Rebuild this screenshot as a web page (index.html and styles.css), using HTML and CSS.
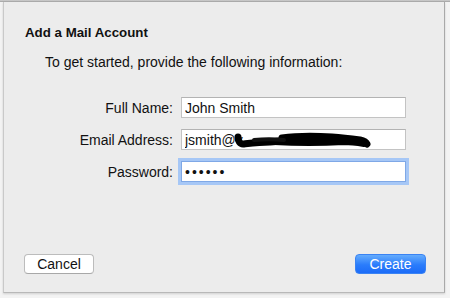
FILE: index.html
```html
<!DOCTYPE html>
<html>
<head>
<meta charset="utf-8">
<link rel="stylesheet" href="styles.css">
</head>
<body>
<div class="topline"></div>
<div class="dialog">
  <div class="title">Add a Mail Account</div>
  <div class="subtitle">To get started, provide the following information:</div>
  <div class="form">
    <label class="label">Full Name:</label>
    <div class="field"><input class="input" type="text" value="John Smith"></div>
    <label class="label">Email Address:</label>
    <div class="field">
      <input class="input" type="text" value="jsmith@v">
      <svg class="redact" width="140" height="16" viewBox="0 0 140 16">
        <path d="M4 5 C4 9 6 12 9 12 C18 11 26 10 36 10 C46 9 52 8 60 8" fill="none" stroke="#000" stroke-width="7" stroke-linecap="round"/>
        <path d="M48 6 C62 4 82 4 98 5 C110 6 118 7 126 8 C130 9 132 10 133 12" fill="none" stroke="#000" stroke-width="7" stroke-linecap="round"/>
        <path d="M40 10 C60 11 90 11 110 10 C118 10 124 11 130 12" fill="none" stroke="#000" stroke-width="6" stroke-linecap="round"/>
        <path d="M60 8 C80 8 100 8 124 9" fill="none" stroke="#000" stroke-width="5" stroke-linecap="round"/>
        <path d="M20 8 C30 7 40 7 50 8" fill="none" stroke="#111" stroke-width="4" stroke-linecap="round"/>
      </svg>
    </div>
    <label class="label">Password:</label>
    <div class="field"><input class="input focus" type="password" value="secret"></div>
  </div>
  <div class="buttons">
    <button class="btn cancel">Cancel</button>
    <button class="btn create">Create</button>
  </div>
</div>
</body>
</html>
```
FILE: styles.css
```css
html, body {
  margin: 0;
  padding: 0;
}
body {
  width: 450px;
  height: 298px;
  background: #f3f3f3;
  font-family: "Liberation Sans", Arial, sans-serif;
  font-size: 14px;
  color: #111;
  overflow: hidden;
}
.topline {
  height: 2px;
  background: linear-gradient(#d4d4d4, #9e9e9e);
}
.dialog {
  margin-left: 3px;
  width: 442px;
  height: 291px;
  background: #ececec;
  border-left: 1px solid #c9c9c9;
  border-right: 1px solid #a9a9a9;
  border-bottom: 1px solid #b8b8b8;
  box-sizing: border-box;
  display: flex;
  flex-direction: column;
  padding: 23px 18px 18px 19px;
  box-shadow: 0 1px 2px rgba(0,0,0,0.15);
}
.title {
  font-weight: bold;
  font-size: 13.3px;
  line-height: 16px;
  padding-left: 2px;
}
.subtitle {
  margin-top: 13px;
  line-height: 16px;
  padding-left: 22px;
}
.form {
  margin-top: 27px;
  display: grid;
  grid-template-columns: 150px 225px;
  column-gap: 8px;
  row-gap: 11px;
  align-items: center;
}
.label {
  text-align: right;
  line-height: 16px;
  padding-top: 1px;
}
.field {
  position: relative;
  height: 21px;
}
.input {
  display: block;
  box-sizing: border-box;
  width: 225px;
  height: 21px;
  margin: 0;
  padding: 1px 3px 0 3px;
  border: 1px solid #c3c3c3;
  border-top-color: #b3b3b3;
  background: #fff;
  font-family: "Liberation Sans", Arial, sans-serif;
  font-size: 14px;
  color: #111;
  outline: none;
}
.focus {
  border-color: #7fa8e6;
  box-shadow: 0 0 0 3px #a6c7f6;
  letter-spacing: 2px;
  font-size: 14px;
}
.redact {
  position: absolute;
  left: 53px;
  top: 3px;
}
.buttons {
  margin-top: auto;
  display: flex;
  justify-content: space-between;
  padding-left: 1px;
}
.btn {
  height: 20px;
  margin: 0;
  padding: 0;
  border-radius: 4px;
  font-family: "Liberation Sans", Arial, sans-serif;
  font-size: 14px;
  line-height: 18px;
  box-sizing: border-box;
}
.cancel {
  width: 70px;
  background: #fff;
  border: 1px solid #bcbcbc;
  border-bottom-color: #a8a8a8;
  color: #111;
}
.create {
  width: 71px;
  background: linear-gradient(#64acfd, #2a7cfb 55%, #1c6cf8);
  border: 1px solid #3a83f3;
  color: #fff;
}
```
